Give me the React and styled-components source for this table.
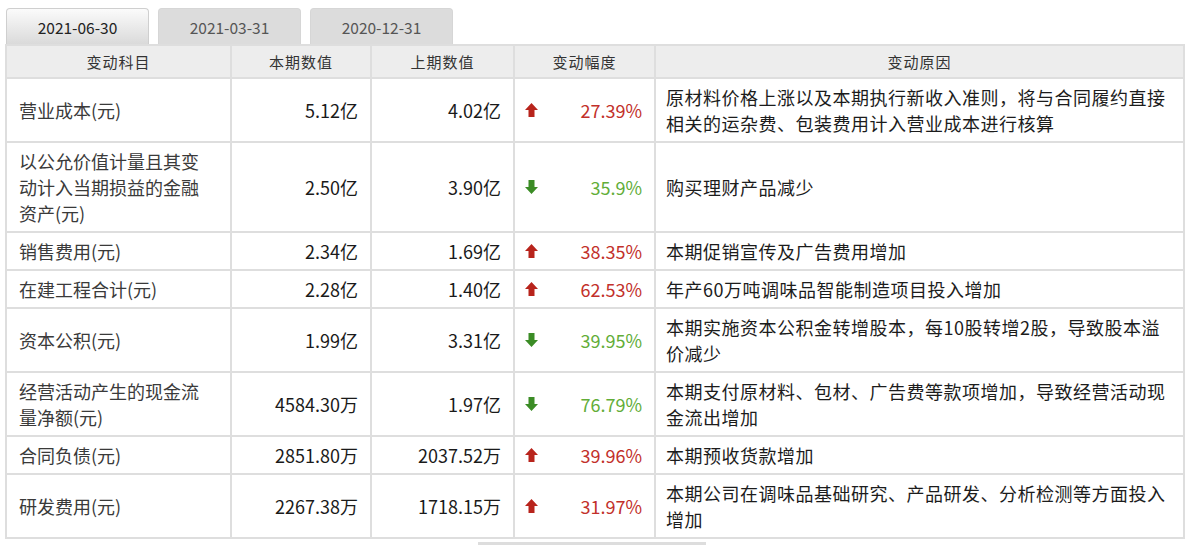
import React from "react";
import styled, { createGlobalStyle } from "styled-components";

const GlobalStyle = createGlobalStyle`
  body {
    margin: 0;
    background: #ffffff;
    font-family: "Noto Sans CJK SC", "Noto Sans", sans-serif;
  }
`;

const Page = styled.div`
  padding: 8px 0 0 5px;
  width: 1179px;
`;

const Tabs = styled.div`
  display: flex;
  gap: 9px;
  height: 36px;
  margin-left: 1px;
`;

const Tab = styled.div`
  box-sizing: border-box;
  width: 143px;
  height: 36px;
  display: flex;
  align-items: center;
  justify-content: center;
  border-radius: 4px 4px 0 0;
  font-size: 15.5px;
  border: 1px solid ${(p) => (p.$active ? "#cfcfcf" : "#d6d6d6")};
  border-bottom: none;
  color: ${(p) => (p.$active ? "#222" : "#555")};
  background: ${(p) =>
    p.$active ? "linear-gradient(#fbfbfb, #dadada)" : "#dcdcdc"};
`;

const Table = styled.table`
  border-collapse: collapse;
  table-layout: fixed;
  width: 1178px;
`;

const HeadCell = styled.th`
  border: 2px solid #dedede;
  background: #ededed;
  height: 31px;
  padding: 0;
  font-size: 15px;
  font-weight: 400;
  letter-spacing: 1px;
  color: #333;
  text-align: center;
`;

const Cell = styled.td`
  border: 2px solid #dedede;
  padding: 5px 12px;
  line-height: 26px;
  vertical-align: middle;
  font-size: 18px;
`;

const NameCell = styled(Cell)`
  padding-right: 20px;
  color: #3a3a3a;
`;

const NumCell = styled(Cell)`
  text-align: right;
  color: #1a1a1a;
`;

const ChangeCell = styled(Cell)`
  padding-left: 10px;
`;

const ChangeWrap = styled.div`
  display: flex;
  align-items: center;
  justify-content: space-between;
`;

const Pct = styled.span`
  color: ${(p) => (p.$up ? "#c2302a" : "#62ad38")};
`;

const ReasonCell = styled(Cell)`
  padding-left: 10px;
  padding-right: 14px;
  letter-spacing: 0.5px;
  color: #1c1c1c;
`;

const Footer = styled.div`
  width: 228px;
  height: 6px;
  margin: 3px 0 0 473px;
  background: #dddddd;
`;

const Arrow = ({ up }) => (
  <svg width="13" height="14" viewBox="0 0 13 14">
    {up ? (
      <path d="M6.5 0 L13 7 H9.5 V14 H3.5 V7 H0 Z" fill="#b8241c" />
    ) : (
      <path d="M6.5 14 L13 7 H9.5 V0 H3.5 V7 H0 Z" fill="#3b8c25" />
    )}
  </svg>
);

const rows = [
  ["营业成本(元)", "5.12亿", "4.02亿", true, "27.39%", "原材料价格上涨以及本期执行新收入准则，将与合同履约直接相关的运杂费、包装费用计入营业成本进行核算"],
  ["以公允价值计量且其变动计入当期损益的金融资产(元)", "2.50亿", "3.90亿", false, "35.9%", "购买理财产品减少"],
  ["销售费用(元)", "2.34亿", "1.69亿", true, "38.35%", "本期促销宣传及广告费用增加"],
  ["在建工程合计(元)", "2.28亿", "1.40亿", true, "62.53%", "年产60万吨调味品智能制造项目投入增加"],
  ["资本公积(元)", "1.99亿", "3.31亿", false, "39.95%", "本期实施资本公积金转增股本，每10股转增2股，导致股本溢价减少"],
  ["经营活动产生的现金流量净额(元)", "4584.30万", "1.97亿", false, "76.79%", "本期支付原材料、包材、广告费等款项增加，导致经营活动现金流出增加"],
  ["合同负债(元)", "2851.80万", "2037.52万", true, "39.96%", "本期预收货款增加"],
  ["研发费用(元)", "2267.38万", "1718.15万", true, "31.97%", "本期公司在调味品基础研究、产品研发、分析检测等方面投入增加"],
];

export default function App() {
  return (
    <Page>
      <GlobalStyle />
      <Tabs>
        <Tab $active>2021-06-30</Tab>
        <Tab>2021-03-31</Tab>
        <Tab>2020-12-31</Tab>
      </Tabs>
      <Table>
        <colgroup>
          <col style={{ width: 225 }} />
          <col style={{ width: 140 }} />
          <col style={{ width: 143 }} />
          <col style={{ width: 141 }} />
          <col style={{ width: 529 }} />
        </colgroup>
        <thead>
          <tr>
            <HeadCell>变动科目</HeadCell>
            <HeadCell>本期数值</HeadCell>
            <HeadCell>上期数值</HeadCell>
            <HeadCell>变动幅度</HeadCell>
            <HeadCell>变动原因</HeadCell>
          </tr>
        </thead>
        <tbody>
          {rows.map((r) => (
            <tr key={r[0]}>
              <NameCell>{r[0]}</NameCell>
              <NumCell>{r[1]}</NumCell>
              <NumCell>{r[2]}</NumCell>
              <ChangeCell>
                <ChangeWrap>
                  <Arrow up={r[3]} />
                  <Pct $up={r[3]}>{r[4]}</Pct>
                </ChangeWrap>
              </ChangeCell>
              <ReasonCell>{r[5]}</ReasonCell>
            </tr>
          ))}
        </tbody>
      </Table>
      <Footer />
    </Page>
  );
}
